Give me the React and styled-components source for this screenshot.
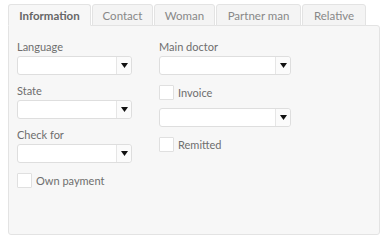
import React from 'react';
import styled, { createGlobalStyle } from 'styled-components';

const GlobalStyle = createGlobalStyle`
	body {
		margin: 0;
		background: #fff;
		font-family: Lato, 'Open Sans', sans-serif;
		font-size: 11px;
		color: #6e6e6e;
	}
`;

const tabs = [
	{ name: 'Information', width: 83 },
	{ name: 'Contact', width: 61 },
	{ name: 'Woman', width: 61 },
	{ name: 'Partner man', width: 85 },
	{ name: 'Relative', width: 64 },
];

const Page = styled.div`
	padding: 4px 12px 0 8px;
	width: 372px;
`;

const TabBar = styled.div`
	display: flex;
	gap: 1px;
	position: relative;
	z-index: 1;
`;

const Tab = styled.div`
	width: ${props => props.width}px;
	box-sizing: border-box;
	height: 22px;
	line-height: 21px;
	text-align: center;
	white-space: nowrap;
	font-size: 11.5px;
	border: 1px solid #e3e3e3;
	border-bottom-color: ${props => (props.active ? '#f7f7f7' : '#e3e3e3')};
	border-radius: 3px 3px 0 0;
	background: ${props => (props.active ? '#f7f7f7' : '#f4f4f4')};
	color: ${props => (props.active ? '#666' : '#888')};
	font-weight: ${props => (props.active ? 700 : 400)};
	margin-bottom: -1px;
`;

const Panel = styled.div`
	border: 1px solid #e3e3e3;
	border-radius: 0 3px 3px 3px;
	background: #f7f7f7;
	padding: 14px 8px 0;
	box-sizing: border-box;
	height: 210px;
	display: flex;
	gap: 27px;
`;

const Column = styled.div`
	display: flex;
	flex-direction: column;
	width: ${props => props.width}px;
`;

const Field = styled.div`
	margin-bottom: ${props => props.gap ?? 9}px;
`;

const Label = styled.div`
	line-height: 14px;
	margin-bottom: 2px;
`;

const SelectBox = styled.div`
	display: flex;
	height: 19px;
	background: #fff;
	border: 1px solid #dedede;
	border-radius: 3px;
	box-sizing: border-box;
	margin-bottom: ${props => props.gap ?? 0}px;
`;

const SelectValue = styled.div`
	flex: 1;
`;

const SelectArrow = styled.div`
	width: 14px;
	border-left: 1px solid #e6e6e6;
	background: #fbfbfb;
	display: flex;
	align-items: center;
	justify-content: center;
	border-radius: 0 3px 3px 0;
`;

const CheckRow = styled.div`
	display: flex;
	align-items: center;
	gap: 4px;
	height: 15px;
	margin-bottom: ${props => props.gap ?? 0}px;
`;

const CheckBox = styled.span`
	width: 15px;
	height: 15px;
	box-sizing: border-box;
	background: #fff;
	border: 1px solid #e0e0e0;
	border-radius: 1px;
`;

const Arrow = () => (
	<svg width="7" height="5" viewBox="0 0 7 5">
		<path d="M0 0 H7 L3.5 5 Z" fill="#111" />
	</svg>
);

const Select = ({ gap }) => (
	<SelectBox gap={gap}>
		<SelectValue />
		<SelectArrow>
			<Arrow />
		</SelectArrow>
	</SelectBox>
);

const Check = ({ label, gap }) => (
	<CheckRow gap={gap}>
		<CheckBox />
		{label}
	</CheckRow>
);

const App = () => (
	<Page>
		<GlobalStyle />
		<TabBar>
			{tabs.map((t, i) => (
				<Tab key={t.name} width={t.width} active={i === 0}>
					{t.name}
				</Tab>
			))}
		</TabBar>
		<Panel>
			<Column width={115}>
				<Field>
					<Label>Language</Label>
					<Select />
				</Field>
				<Field>
					<Label>State</Label>
					<Select />
				</Field>
				<Field gap={10}>
					<Label>Check for</Label>
					<Select />
				</Field>
				<Check label="Own payment" />
			</Column>
			<Column width={132}>
				<Field gap={10}>
					<Label>Main doctor</Label>
					<Select />
				</Field>
				<Check label="Invoice" gap={8} />
				<Select gap={10} />
				<Check label="Remitted" />
			</Column>
		</Panel>
	</Page>
);

export default App;
